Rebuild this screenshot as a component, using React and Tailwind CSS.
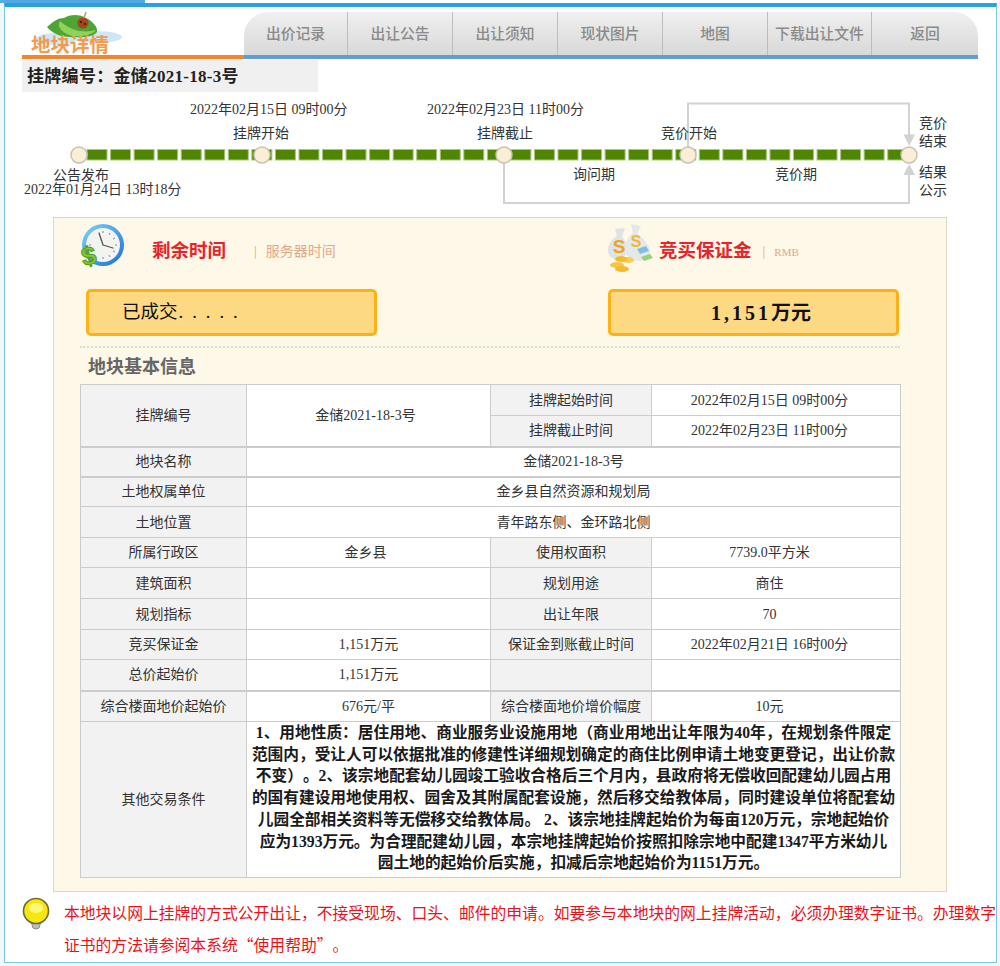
import React from "react";

const tabs = ["出价记录", "出让公告", "出让须知", "现状图片", "地图", "下载出让文件", "返回"];
const tabWidths = ["w-[104px]", "w-[105px]", "w-[105px]", "w-[105px]", "w-[105px]", "w-[104px]", "w-[106px]"];
const segs = Array.from({ length: 35 }, (_, k) => 87 + k * 23.55);
const dots = [79, 262, 504, 688, 909];

function Label({ children, thick }) {
  return <td className={"border border-[#cccccc] bg-[#f2f2f2] text-center align-middle text-[14px] text-[#333333]" + (thick ? " border-b-2" : "")}>{children}</td>;
}
function Value({ children, colSpan, rowSpan, thick, pad }) {
  return <td colSpan={colSpan} rowSpan={rowSpan} className={"border border-[#cccccc] bg-white text-center align-middle text-[14px] text-[#333333]" + (thick ? " border-b-2" : "") + (pad === "right" ? " pr-[13px]" : "") + (pad === "left" ? " pr-[6px]" : "")}>{children}</td>;
}

function Logo() {
  return (
    <svg width="100" height="36" viewBox="0 0 100 36" className="absolute left-[8px] top-0">
      <ellipse cx="26" cy="27" rx="20" ry="6" fill="#cfe6f6" />
      <ellipse cx="66" cy="25" rx="26" ry="6" fill="#cfe6f6" />
      <path d="M17 15 C24 9 28 6 34 6 C40 2 50 2 56 6 C64 10 68 16 67 20 C64 25 50 26 40 25 C30 25 22 21 17 15Z" fill="#4fa534" />
      <path d="M30 9 C27 14 30 20 42 24 C52 25 62 23 66 18 C56 21 42 20 30 9Z" fill="#8fd25a" />
      <circle cx="53" cy="11" r="5.500" fill="#a8431f" />
      <circle cx="51" cy="10" r="1" fill="#2a1208" />
      <circle cx="55" cy="12" r="1" fill="#2a1208" />
      <path d="M54 6 L56 0" stroke="#aa9a88" strokeWidth="1.500" />
    </svg>
  );
}

function ClockIcon() {
  return (
    <svg width="48" height="50" viewBox="0 0 48 50" className="shrink-0">
      <defs>
        <linearGradient id="ring" x1="0" y1="0" x2="1" y2="1">
          <stop offset="0" stopColor="#7fd4f7" />
          <stop offset="1" stopColor="#1a6fd8" />
        </linearGradient>
      </defs>
      <circle cx="25" cy="22" r="21" fill="url(#ring)" />
      <circle cx="25" cy="22" r="17" fill="#f3f3f0" />
      <path d="M25 22 L21 10 M25 22 L35 25" stroke="#555555" strokeWidth="1.300" strokeLinecap="round" />
      <path d="M25 8v2M39 22h-2M25 36v-2M11 22h2M32 10l-1 2M37 15l-2 1M37 29l-2-1M32 34l-1-2" stroke="#888888" strokeWidth="1" />
      <text x="11" y="42" fontSize="26" fontWeight="700" textAnchor="middle" fill="#84c832" stroke="#4f9a1c" strokeWidth="1" transform="rotate(-12 11 34)" fontFamily="Liberation Sans">$</text>
    </svg>
  );
}

function MoneyIcon() {
  return (
    <svg width="50" height="50" viewBox="0 0 50 50" className="shrink-0">
      <path d="M8 6 L18 5 L15 14 C22 20 22 34 13 36 C4 37 0 32 1 25 C2 19 7 15 10 13Z" fill="#dfe3e6" />
      <path d="M24 1 L34 3 L30 11 C40 17 48 30 40 36 C30 40 20 37 18 28 C17 20 22 13 26 10Z" fill="#e4e8ea" />
      <text x="12" y="30" fontSize="19" fontWeight="700" textAnchor="middle" fill="#eaa62a" fontFamily="Liberation Sans">S</text>
      <text x="29" y="24" fontSize="16" fontWeight="700" textAnchor="middle" fill="#f0b73c" fontFamily="Liberation Sans">S</text>
      <path d="M30 26 l9 -3 l3 5 l-9 3Z" fill="#7fc0e0" />
      <path d="M34 34 l9 -3 l3 4 l-9 3Z" fill="#9ad07a" />
      <ellipse cx="10" cy="42" rx="7" ry="3" fill="#f5c63f" />
      <ellipse cx="15" cy="46" rx="7" ry="3" fill="#f2bb2e" />
      <ellipse cx="21" cy="37" rx="6" ry="3" fill="#f7cd4b" />
      <ellipse cx="14" cy="36" rx="6" ry="3" fill="#f2bb2e" />
    </svg>
  );
}

function Bulb() {
  return (
    <svg width="30" height="34" viewBox="0 0 30 34" className="shrink-0">
      <path d="M10 24 L12 31 Q15 33 18 31 L20 24Z" fill="#b9bcc0" stroke="#8a8d90" />
      <circle cx="15" cy="14" r="12.500" fill="#f7e70e" stroke="#6b6a3a" strokeWidth="1.600" />
      <ellipse cx="15" cy="11" rx="7" ry="5" fill="#fdf87a" />
    </svg>
  );
}

function Timeline() {
  const t = "absolute whitespace-nowrap text-[14px] leading-[16px] text-[#333333]";
  const s = "absolute whitespace-nowrap text-[14px] leading-[18px] text-[#333333]";
  return (
    <div className="relative h-[125px] w-full">
      <svg width="990" height="125" viewBox="5 92 990 125" className="absolute left-0 top-0">
        <path d="M688 155 V103.500 H909 V136" fill="none" stroke="#d2d2d2" strokeWidth="2" />
        <path d="M504 155 V203 H909 V172" fill="none" stroke="#d2d2d2" strokeWidth="2" />
        <path d="M903.500 134.500 H915 L909.200 146Z" fill="#d2d2d2" />
        <path d="M903.500 175 H915 L909.200 164Z" fill="#d2d2d2" />
        {segs.map((x) => (
          <rect key={x} x={x} y="149.500" width="20" height="10.500" fill="#4f8600" stroke="#a9c77f" strokeWidth="1" />
        ))}
        {dots.map((x) => (
          <circle key={x} cx={x} cy="155" r="8" fill="#fbeed6" stroke="#c7c2b4" strokeWidth="1.500" />
        ))}
      </svg>
      <span className={t + " left-[185px] top-[10px]"}>2022年02月15日 09时00分</span>
      <span className={t + " left-[422px] top-[10px]"}>2022年02月23日 11时00分</span>
      <span className={t + " left-[19px] top-[90px]"}>2022年01月24日 13时18分</span>
      <span className={s + " left-[228px] top-[33px]"}>挂牌开始</span>
      <span className={s + " left-[472px] top-[33px]"}>挂牌截止</span>
      <span className={s + " left-[656px] top-[33px]"}>竞价开始</span>
      <span className={s + " left-[48px] top-[75px]"}>公告发布</span>
      <span className={s + " left-[568px] top-[74px]"}>询问期</span>
      <span className={s + " left-[770px] top-[74px]"}>竞价期</span>
      <span className={s + " left-[914px] top-[23px]"}>竞价<br />结束</span>
      <span className={s + " left-[914px] top-[72px]"}>结果<br />公示</span>
    </div>
  );
}

export default function App() {
  return (
    <div className="h-[966px] w-[1000px] overflow-hidden bg-[#eff9fc] pb-[3px] pl-[4px] pr-[3px] font-['Liberation_Serif','Noto_Sans_CJK_SC',serif] [text-spacing-trim:space-all]">
      <div className="-ml-[4px] -mr-[3px] h-[3px] bg-white">
        <div className="h-[3px] w-[145px] bg-[#55a9e2]"></div>
      </div>
      <div className="h-[960px] border border-t-4 border-[#7fc4e2] border-t-[#27a1e2] bg-white">
        <div className="ml-[17px] mt-[5px] flex w-[956px]">
          <div className="relative h-[47px] w-[222px] border-b-4 border-[#f5842b]">
            <Logo />
            <span className="absolute left-[9px] top-[21px] text-[19.500px] font-bold leading-[26px] text-[#f49a4d]">地块详情</span>
          </div>
          <div className="flex h-[47px] w-[734px] overflow-hidden rounded-tl-[24px] rounded-tr-[24px] border-b-4 border-[#5c9ddb]">
            {tabs.map((tab, i) => (
              <div key={tab} className={tabWidths[i] + " flex items-center justify-center border-r border-r-[#bdbdbd] bg-gradient-to-b from-[#f0f0f0] to-[#d8d8d8] pt-[2px] text-[14.800px] font-medium text-[#8a8a8a] last:border-r-0"}>
                {tab}
              </div>
            ))}
          </div>
        </div>
        <div className="ml-[17px] mt-px flex h-[32px] w-[296px] items-center bg-[#f0f0f0] pl-[5px] pt-[1px] text-[17px] font-bold tracking-[0.3px] text-[#222222]">
          挂牌编号：金储2021-18-3号
        </div>

        <Timeline />

        <div className="ml-[48px] h-[675px] w-[894px] border border-[#ddd7c2] bg-[#fdf8e7] pl-[26px] pt-[6px]">
          <div className="flex h-[47px] w-[820px]">
            <div className="flex w-[527px] items-center">
              <div className="-ml-[2px] w-[48px]"><ClockIcon /></div>
              <span className="ml-[26px] pt-[8px] text-[18.500px] font-bold text-[#e8232b]">剩余时间</span>
              <span className="ml-[28px] pt-[8px] text-[14px] text-[#e2a88a]">|<span className="ml-[9px]">服务器时间</span></span>
            </div>
            <div className="flex items-center">
              <MoneyIcon />
              <span className="ml-[2px] pt-[8px] text-[18.500px] font-bold text-[#e8232b]">竞买保证金</span>
              <span className="ml-[11px] pt-[8px] text-[14px] text-[#e2a88a]">|<span className="ml-[9px] text-[11px]">RMB</span></span>
            </div>
          </div>
          <div className="mt-[18px] flex h-[47px] w-[819px] justify-between pl-[6px]">
            <div className="flex h-[47px] w-[291px] items-center rounded-[5px] border-[3px] border-[#fcb116] bg-[#fed983] pl-[33px] pt-[1px] text-[18.500px] text-[#111111]">
              已成交<span className="ml-[1px] tracking-[9px]">.....</span>
            </div>
            <div className="flex h-[47px] w-[291px] items-center rounded-[5px] border-[3px] border-[#fcb116] bg-[#fed983] pl-[100px] pt-[1px] text-[20px] font-bold text-[#111111]">
              <span className="tracking-[3px]">1,151</span>万元
            </div>
          </div>
          <div className="mt-[10px] h-[2px] w-[820px] border-t-2 border-dotted border-[#dcdcd2]"></div>
          <div className="flex h-[36px] items-center pl-[8px] pt-[2px] text-[18px] font-bold text-[#666666]">地块基本信息</div>
          <table className="w-[820px] table-fixed border-collapse">
            <colgroup>
              <col className="w-[166px]" />
              <col className="w-[244px]" />
              <col className="w-[161px]" />
              <col className="w-[249px]" />
            </colgroup>
            <tbody>
              <tr className="h-[31px]">
                <td rowSpan={2} className="border border-b-2 border-[#cccccc] bg-[#f2f2f2] text-center align-middle text-[14px] text-[#333333]">挂牌编号</td>
                <Value rowSpan={2} thick pad="left">金储2021-18-3号</Value>
                <Label>挂牌起始时间</Label>
                <Value pad="right">2022年02月15日 09时00分</Value>
              </tr>
              <tr className="h-[31px]">
                <Label thick>挂牌截止时间</Label>
                <Value thick pad="right">2022年02月23日 11时00分</Value>
              </tr>
              <tr className="h-[30px]"><Label thick>地块名称</Label><Value colSpan={3} thick>金储2021-18-3号</Value></tr>
              <tr className="h-[30px]"><Label>土地权属单位</Label><Value colSpan={3}>金乡县自然资源和规划局</Value></tr>
              <tr className="h-[31px]"><Label>土地位置</Label><Value colSpan={3}>青年路东侧、金环路北侧</Value></tr>
              <tr className="h-[30px]"><Label>所属行政区</Label><Value pad="left">金乡县</Value><Label>使用权面积</Label><Value pad="right">7739.0平方米</Value></tr>
              <tr className="h-[31px]"><Label>建筑面积</Label><Value></Value><Label>规划用途</Label><Value pad="right">商住</Value></tr>
              <tr className="h-[31px]"><Label>规划指标</Label><Value></Value><Label>出让年限</Label><Value pad="right">70</Value></tr>
              <tr className="h-[30px]"><Label>竞买保证金</Label><Value>1,151万元</Value><Label>保证金到账截止时间</Label><Value pad="right">2022年02月21日 16时00分</Value></tr>
              <tr className="h-[31px]"><Label thick>总价起始价</Label><Value thick>1,151万元</Value><Label thick></Label><Value thick></Value></tr>
              <tr className="h-[31px]"><Label>综合楼面地价起始价</Label><Value>676元/平</Value><Label>综合楼面地价增价幅度</Label><Value pad="right">10元</Value></tr>
              <tr className="h-[152px]">
                <Label>其他交易条件</Label>
                <td colSpan={3} className="border border-[#cccccc] bg-white px-0 pb-[3px] text-center align-middle text-[15.700px] font-bold leading-[21.700px] text-[#1a1a1a]">
                  <div className="whitespace-nowrap">
                    1、用地性质：居住用地、商业服务业设施用地（商业用地出让年限为40年，在规划条件限定<br />
                    范围内，受让人可以依据批准的修建性详细规划确定的商住比例申请土地变更登记，出让价款<br />
                    不变）。2、该宗地配套幼儿园竣工验收合格后三个月内，县政府将无偿收回配建幼儿园占用<br />
                    的国有建设用地使用权、园舍及其附属配套设施，然后移交给教体局，同时建设单位将配套幼<br />
                    儿园全部相关资料等无偿移交给教体局。 2、该宗地挂牌起始价为每亩120万元，宗地起始价<br />
                    应为1393万元。为合理配建幼儿园，本宗地挂牌起始价按照扣除宗地中配建1347平方米幼儿<br />
                    园土地的起始价后实施，扣减后宗地起始价为1151万元。
                  </div>
                </td>
              </tr>
            </tbody>
          </table>
        </div>

        <div className="ml-[17px] mt-[6px] flex">
          <div className="-mt-[1px] -ml-[1px] w-[43px]"><Bulb /></div>
          <p className="whitespace-nowrap text-[15.800px] leading-[31px] text-[#e8121a]">
            本地块以网上挂牌的方式公开出让，不接受现场、口头、邮件的申请。如要参与本地块的网上挂牌活动，必须办理数字证书。办理数字<br />
            证书的方法请参阅本系统<span className="font-['Noto_Sans_CJK_SC',sans-serif]">“</span>使用帮助<span className="font-['Noto_Sans_CJK_SC',sans-serif]">”</span>。
          </p>
        </div>
      </div>
    </div>
  );
}
